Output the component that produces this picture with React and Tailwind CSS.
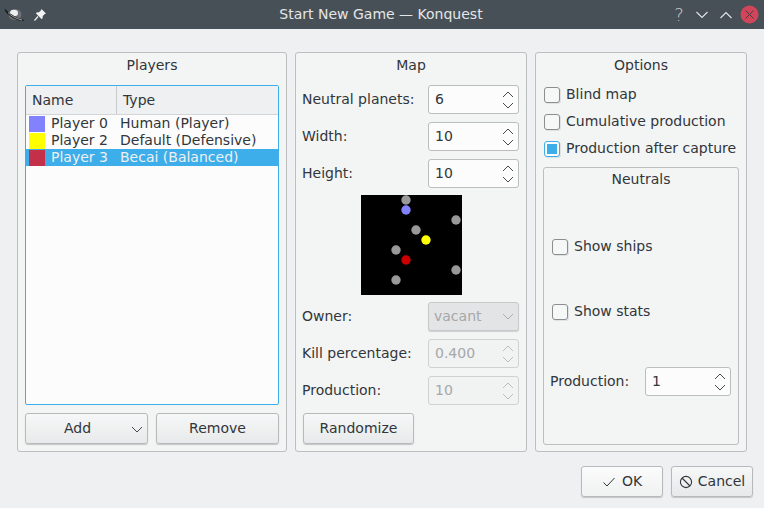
import React from "react";

const Up = ({ c }) => (
  <svg width="12" height="7" viewBox="0 0 12 7" fill="none" stroke={c} strokeWidth="0.9"><path d="M1 6L6 1L11 6" /></svg>
);
const Down = ({ c }) => (
  <svg width="12" height="7" viewBox="0 0 12 7" fill="none" stroke={c} strokeWidth="0.9"><path d="M1 1L6 6L11 1" /></svg>
);

function Spin({ value, disabled, w = "w-[91px]" }) {
  const arrow = disabled ? "#b4b6b7" : "#31363b";
  return (
    <div className={`${w} h-[29px] rounded-[3px] border flex items-center justify-between pl-[6px] pr-[4px] ${disabled ? "border-[#d0d1d2] bg-[#f1f2f2] text-[#a6a8a9]" : "border-[#bcbdbe] bg-[#fcfcfc] text-[#31363b]"}`}>
      <span>{value}</span>
      <div className="flex flex-col gap-[4px]"><Up c={arrow} /><Down c={arrow} /></div>
    </div>
  );
}

function Row({ label, children }) {
  return (
    <div className="flex items-center justify-between pr-[7px] pl-[6px] h-[29px]">
      <span>{label}</span>
      {children}
    </div>
  );
}

function Check({ label, checked, className = "" }) {
  return (
    <div className={`flex items-center gap-[6px] h-[17px] ${className}`}>
      <div className={`w-[16px] h-[16px] rounded-[3px] border flex items-center justify-center shadow-[1px_1px_0_#e0e1e2] ${checked ? "border-[#3daee9] bg-[#fcfcfc]" : "border-[#8b8d8f] bg-[#f6f7f7]"}`}>
        {checked && <div className="w-[10px] h-[10px] bg-[#3daee9]" />}
      </div>
      <span>{label}</span>
    </div>
  );
}

function Btn({ children, className = "" }) {
  return (
    <div className={`h-[31px] rounded-[3px] border border-[#b8b9ba] bg-linear-to-b from-[#f6f7f7] to-[#e8e9ea] shadow-[0_1px_1px_#c4c5c6] flex items-center justify-center text-[#31363b] ${className}`}>
      {children}
    </div>
  );
}

const Group = ({ title, className = "", children }) => (
  <div className={`rounded-[3px] border border-[#bcbebf] bg-[#f3f4f4] flex flex-col ${className}`}>
    <div className="h-[24px] pt-[3px] text-center leading-[18px] shrink-0">{title}</div>
    {children}
  </div>
);

const players = [
  ["#8282ff", "Player 0", "Human (Player)"],
  ["#ffff00", "Player 2", "Default (Defensive)"],
  ["#c4304a", "Player 3", "Becai (Balanced)"],
];

const planets = [
  [45, 5, "#999999"],
  [45, 15, "#8282ff"],
  [95, 25, "#999999"],
  [55, 35, "#999999"],
  [65, 45, "#ffff00"],
  [35, 55, "#999999"],
  [45, 65, "#cc0000"],
  [95, 75, "#999999"],
  [35, 85, "#999999"],
];

export default function App() {
  return (
    <div className="w-[764px] h-[508px] bg-[#eff0f1] overflow-hidden flex flex-col text-[#31363b] text-[14px] leading-[17px]" style={{ fontFamily: '"DejaVu Sans", sans-serif' }}>
      {/* title bar */}
      <div className="h-[29px] bg-[#475057] flex items-center shrink-0 text-[#e4e6e7]">
        <div className="w-[75px] flex items-center pl-[4px] gap-[8px]">
          <svg width="21" height="16" viewBox="0 0 21 16">
            <ellipse cx="11" cy="7.5" rx="6.5" ry="5.5" fill="#6d7175" />
            <ellipse cx="10" cy="6" rx="4" ry="3.2" fill="#eef0f0" />
            <path d="M1 1.5 C 3 5 12 11 20 13 C 21 14 15 14.5 9 11 C 4 8 0 4 1 1.5Z" fill="#15181a" />
            <path d="M4 5.5 C 7 9 13 12 18 13" fill="none" stroke="#c4c6c8" strokeWidth="0.8" />
          </svg>
          <svg width="14" height="14" viewBox="0 0 14 14" fill="#f2f3f3">
            <path d="M8.5 1L13 5.5L11.8 6L9.8 8L9.5 10.5L8.5 11L3 5.5L3.5 4.5L6 4.2L8 2.2Z" />
            <path d="M5 8.5L1.5 12.5" stroke="#f2f3f3" strokeWidth="1.2" />
          </svg>
        </div>
        <div className="flex-1 text-center pl-[15px]">Start New Game — Konquest</div>
        <div className="w-[92px] flex items-center">
          <span className="w-[16px] -ml-[1px] text-center text-[18px] font-light text-[#c8cacb]">?</span>
          <svg className="ml-[9px]" width="12" height="8" viewBox="0 0 12 8" fill="none" stroke="#e4e6e7" strokeWidth="1.1"><path d="M0.5 1L6 6.5L11.5 1" /></svg>
          <svg className="ml-[12px]" width="12" height="8" viewBox="0 0 12 8" fill="none" stroke="#e4e6e7" strokeWidth="1.1"><path d="M0.5 7L6 1.5L11.5 7" /></svg>
          <svg className="ml-[8px]" width="19" height="19" viewBox="0 0 19 19"><circle cx="9.5" cy="9.5" r="9" fill="#d0455a" /><path d="M5.5 5.5L13.5 13.5M13.5 5.5L5.5 13.5" stroke="#4a3a40" strokeWidth="1" /></svg>
        </div>
      </div>

      {/* groups */}
      <div className="flex gap-[8px] pl-[17px] pt-[23px] h-[400px] shrink-0 box-content">
        <Group title="Players" className="w-[270px] h-[400px]">
          <div className="px-[7px] pt-[8px] flex flex-col gap-[8px]">
            <div className="h-[320px] border border-[#3daee9] rounded-[2px] bg-[#fcfcfc] flex flex-col">
              <div className="h-[29px] bg-[#eff0f1] border-b border-[#d4d5d6] flex items-center shrink-0">
                <div className="w-[91px] h-full border-r border-[#c8c9ca] pl-[6px] flex items-center">Name</div>
                <div className="pl-[6px]">Type</div>
              </div>
              {players.map(([c, n, t], i) => (
                <div key={n} className={`h-[17px] flex items-center ${i === 2 ? "bg-[#3daee9] text-[#eff0f1]" : ""}`}>
                  <div className="w-[16px] h-[16px] ml-[3px]" style={{ background: c }} />
                  <span className="w-[69px] ml-[6px]">{n}</span>
                  <span>{t}</span>
                </div>
              ))}
            </div>
            <div className="flex gap-[8px]">
              <Btn className="w-[123px] relative pr-[18px]">
                Add
                <svg className="absolute right-[4px] top-[12px]" width="12" height="7" viewBox="0 0 12 7" fill="none" stroke="#31363b" strokeWidth="0.9"><path d="M1 1L6 6L11 1" /></svg>
              </Btn>
              <Btn className="w-[123px]">Remove</Btn>
            </div>
          </div>
        </Group>

        <Group title="Map" className="w-[232px] h-[400px]">
          <div className="pt-[8px] flex flex-col gap-[8px]">
            <Row label="Neutral planets:"><Spin value="6" /></Row>
            <Row label="Width:"><Spin value="10" /></Row>
            <Row label="Height:"><Spin value="10" /></Row>
            <div className="flex justify-center -my-[1px]">
              <svg width="101" height="100" viewBox="0 0 101 100" className="block bg-black">
                {planets.map(([x, y, c], i) => <circle key={i} cx={x} cy={y} r="4.7" fill={c} />)}
              </svg>
            </div>
            <Row label="Owner:">
              <div className="w-[91px] h-[29px] rounded-[3px] border border-[#c8c9ca] bg-[#e3e4e5] shadow-[0_1px_1px_#cfd0d1] flex items-center justify-between pl-[5px] pr-[4px] text-[#a6a8a9]">
                <span>vacant</span><Down c="#a6a8a9" />
              </div>
            </Row>
            <Row label="Kill percentage:"><Spin value="0.400" disabled /></Row>
            <Row label="Production:"><Spin value="10" disabled /></Row>
            <Btn className="w-[111px] ml-[7px]">Randomize</Btn>
          </div>
        </Group>

        <Group title="Options" className="w-[212px] h-[400px]">
          <div className="pl-[7px] pr-[7px] pt-[9px] flex flex-col gap-[10px]">
            <Check label="Blind map" className="ml-[1px]" />
            <Check label="Cumulative production" className="ml-[1px]" />
            <Check label="Production after capture" checked className="ml-[1px]" />
            <div className="h-[278px] rounded-[3px] border border-[#bcbebf] flex flex-col">
              <div className="h-[24px] pt-[2px] text-center leading-[18px]">Neutrals</div>
              <Check label="Show ships" className="ml-[8px] mt-[46px]" />
              <Check label="Show stats" className="ml-[8px] mt-[48px]" />
              <div className="flex items-center justify-between pl-[6px] pr-[7px] h-[29px] mt-[47px]">
                <span>Production:</span>
                <Spin value="1" w="w-[86px]" />
              </div>
            </div>
          </div>
        </Group>
      </div>

      {/* footer */}
      <div className="flex justify-end gap-[8px] pr-[11px] pt-[14px]">
        <Btn className="w-[82px] gap-[6px] bg-linear-to-b from-[#fbfbfb] to-[#f0f1f1]">
          <svg width="14" height="12" viewBox="0 0 14 12" fill="none" stroke="#31363b" strokeWidth="1"><path d="M1.5 6.5L5 10L12.5 2" /></svg>
          OK
        </Btn>
        <Btn className="w-[82px] gap-[5px]">
          <svg width="14" height="14" viewBox="0 0 14 14" fill="none" stroke="#31363b" strokeWidth="1.1"><circle cx="7" cy="7" r="5.6" /><path d="M3 3L11 11" /></svg>
          Cancel
        </Btn>
      </div>
    </div>
  );
}
